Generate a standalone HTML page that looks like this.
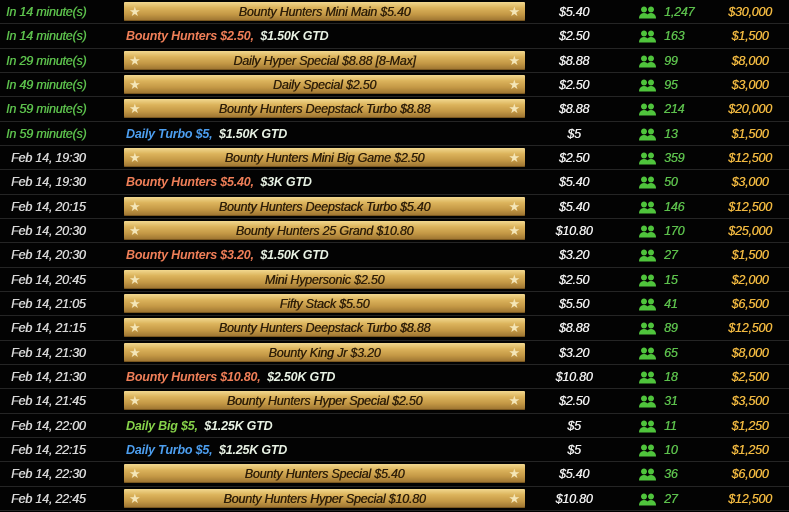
<!DOCTYPE html>
<html><head><meta charset="utf-8"><style>
*{margin:0;padding:0;box-sizing:border-box}
body{width:789px;height:511px;overflow:hidden;background:#000;font-family:"Liberation Sans",sans-serif;font-style:italic;font-weight:bold;font-size:12px;letter-spacing:-0.2px}
.r{position:relative;height:24.33px;border-bottom:1px solid #252525;background:#030303}
.r>*{position:absolute;top:0;line-height:25px;white-space:nowrap}
.t,.bi,.p,.z,.b{text-shadow:0.4px 0 currentColor}
.t{left:6px;color:#5cc04c;font-weight:normal;font-size:12.5px}
.t.f{left:11px;color:#d8d8d8}
.b{left:124px;width:401px;top:2px;height:19px;line-height:20px;text-align:center;color:#2e1e08;font-weight:normal;font-size:12.5px;
background:linear-gradient(180deg,#f2d890 0%,#dcb45c 30%,#c49845 65%,#9a7230 100%);border-radius:1px;box-shadow:inset 0 -1px 0 #7a5820}
.b:before,.b:after{content:"★";position:absolute;top:0;color:#f4e6b8;font-style:normal;font-size:13px;text-shadow:none}
.b:before{left:5px}.b:after{right:5px}
.n{left:126px;font-size:12.5px}
.o{color:#f07f58}.g{color:#86d24a}.bl{color:#4d9ff0}.w{color:#e8f2e4}
.bi{left:530px;width:88px;text-align:center;color:#f0f0f0;font-weight:normal;font-size:12.5px}
.ic{left:639px;top:6px;line-height:0}
.p{left:664px;color:#5cc04c;font-weight:normal;font-size:12.5px}
.z{left:700px;width:100px;text-align:center;color:#f0b840;font-weight:normal;font-size:12.5px}
</style></head><body>
<svg width="0" height="0" style="position:absolute"><defs><g id="u" fill="#4fc43c"><circle cx="5" cy="3.5" r="3"/><circle cx="12" cy="3.5" r="3"/><path d="M0 12.5c0-3.5 2.2-5.5 5-5.5s5 2 5 5.5z"/><path d="M7 12.5c0-3.5 2.2-5.5 5-5.5s5 2 5 5.5z"/></g></defs></svg>

<div class="r"><span class="t">In 14 minute(s)</span><span class="b">Bounty Hunters Mini Main $5.40</span><span class="bi">$5.40</span><svg class="ic" width="17" height="13"><use href="#u"/></svg><span class="p">1,247</span><span class="z">$30,000</span></div>
<div class="r"><span class="t">In 14 minute(s)</span><span class="n"><span class="o">Bounty Hunters $2.50,</span>&nbsp; <span class="w">$1.50K GTD</span></span><span class="bi">$2.50</span><svg class="ic" width="17" height="13"><use href="#u"/></svg><span class="p">163</span><span class="z">$1,500</span></div>
<div class="r"><span class="t">In 29 minute(s)</span><span class="b">Daily Hyper Special $8.88 [8-Max]</span><span class="bi">$8.88</span><svg class="ic" width="17" height="13"><use href="#u"/></svg><span class="p">99</span><span class="z">$8,000</span></div>
<div class="r"><span class="t">In 49 minute(s)</span><span class="b">Daily Special $2.50</span><span class="bi">$2.50</span><svg class="ic" width="17" height="13"><use href="#u"/></svg><span class="p">95</span><span class="z">$3,000</span></div>
<div class="r"><span class="t">In 59 minute(s)</span><span class="b">Bounty Hunters Deepstack Turbo $8.88</span><span class="bi">$8.88</span><svg class="ic" width="17" height="13"><use href="#u"/></svg><span class="p">214</span><span class="z">$20,000</span></div>
<div class="r"><span class="t">In 59 minute(s)</span><span class="n"><span class="bl">Daily Turbo $5,</span>&nbsp; <span class="w">$1.50K GTD</span></span><span class="bi">$5</span><svg class="ic" width="17" height="13"><use href="#u"/></svg><span class="p">13</span><span class="z">$1,500</span></div>
<div class="r"><span class="t f">Feb 14, 19:30</span><span class="b">Bounty Hunters Mini Big Game $2.50</span><span class="bi">$2.50</span><svg class="ic" width="17" height="13"><use href="#u"/></svg><span class="p">359</span><span class="z">$12,500</span></div>
<div class="r"><span class="t f">Feb 14, 19:30</span><span class="n"><span class="o">Bounty Hunters $5.40,</span>&nbsp; <span class="w">$3K GTD</span></span><span class="bi">$5.40</span><svg class="ic" width="17" height="13"><use href="#u"/></svg><span class="p">50</span><span class="z">$3,000</span></div>
<div class="r"><span class="t f">Feb 14, 20:15</span><span class="b">Bounty Hunters Deepstack Turbo $5.40</span><span class="bi">$5.40</span><svg class="ic" width="17" height="13"><use href="#u"/></svg><span class="p">146</span><span class="z">$12,500</span></div>
<div class="r"><span class="t f">Feb 14, 20:30</span><span class="b">Bounty Hunters 25 Grand $10.80</span><span class="bi">$10.80</span><svg class="ic" width="17" height="13"><use href="#u"/></svg><span class="p">170</span><span class="z">$25,000</span></div>
<div class="r"><span class="t f">Feb 14, 20:30</span><span class="n"><span class="o">Bounty Hunters $3.20,</span>&nbsp; <span class="w">$1.50K GTD</span></span><span class="bi">$3.20</span><svg class="ic" width="17" height="13"><use href="#u"/></svg><span class="p">27</span><span class="z">$1,500</span></div>
<div class="r"><span class="t f">Feb 14, 20:45</span><span class="b">Mini Hypersonic $2.50</span><span class="bi">$2.50</span><svg class="ic" width="17" height="13"><use href="#u"/></svg><span class="p">15</span><span class="z">$2,000</span></div>
<div class="r"><span class="t f">Feb 14, 21:05</span><span class="b">Fifty Stack $5.50</span><span class="bi">$5.50</span><svg class="ic" width="17" height="13"><use href="#u"/></svg><span class="p">41</span><span class="z">$6,500</span></div>
<div class="r"><span class="t f">Feb 14, 21:15</span><span class="b">Bounty Hunters Deepstack Turbo $8.88</span><span class="bi">$8.88</span><svg class="ic" width="17" height="13"><use href="#u"/></svg><span class="p">89</span><span class="z">$12,500</span></div>
<div class="r"><span class="t f">Feb 14, 21:30</span><span class="b">Bounty King Jr $3.20</span><span class="bi">$3.20</span><svg class="ic" width="17" height="13"><use href="#u"/></svg><span class="p">65</span><span class="z">$8,000</span></div>
<div class="r"><span class="t f">Feb 14, 21:30</span><span class="n"><span class="o">Bounty Hunters $10.80,</span>&nbsp; <span class="w">$2.50K GTD</span></span><span class="bi">$10.80</span><svg class="ic" width="17" height="13"><use href="#u"/></svg><span class="p">18</span><span class="z">$2,500</span></div>
<div class="r"><span class="t f">Feb 14, 21:45</span><span class="b">Bounty Hunters Hyper Special $2.50</span><span class="bi">$2.50</span><svg class="ic" width="17" height="13"><use href="#u"/></svg><span class="p">31</span><span class="z">$3,500</span></div>
<div class="r"><span class="t f">Feb 14, 22:00</span><span class="n"><span class="g">Daily Big $5,</span>&nbsp; <span class="w">$1.25K GTD</span></span><span class="bi">$5</span><svg class="ic" width="17" height="13"><use href="#u"/></svg><span class="p">11</span><span class="z">$1,250</span></div>
<div class="r"><span class="t f">Feb 14, 22:15</span><span class="n"><span class="bl">Daily Turbo $5,</span>&nbsp; <span class="w">$1.25K GTD</span></span><span class="bi">$5</span><svg class="ic" width="17" height="13"><use href="#u"/></svg><span class="p">10</span><span class="z">$1,250</span></div>
<div class="r"><span class="t f">Feb 14, 22:30</span><span class="b">Bounty Hunters Special $5.40</span><span class="bi">$5.40</span><svg class="ic" width="17" height="13"><use href="#u"/></svg><span class="p">36</span><span class="z">$6,000</span></div>
<div class="r"><span class="t f">Feb 14, 22:45</span><span class="b">Bounty Hunters Hyper Special $10.80</span><span class="bi">$10.80</span><svg class="ic" width="17" height="13"><use href="#u"/></svg><span class="p">27</span><span class="z">$12,500</span></div>
</body></html>
